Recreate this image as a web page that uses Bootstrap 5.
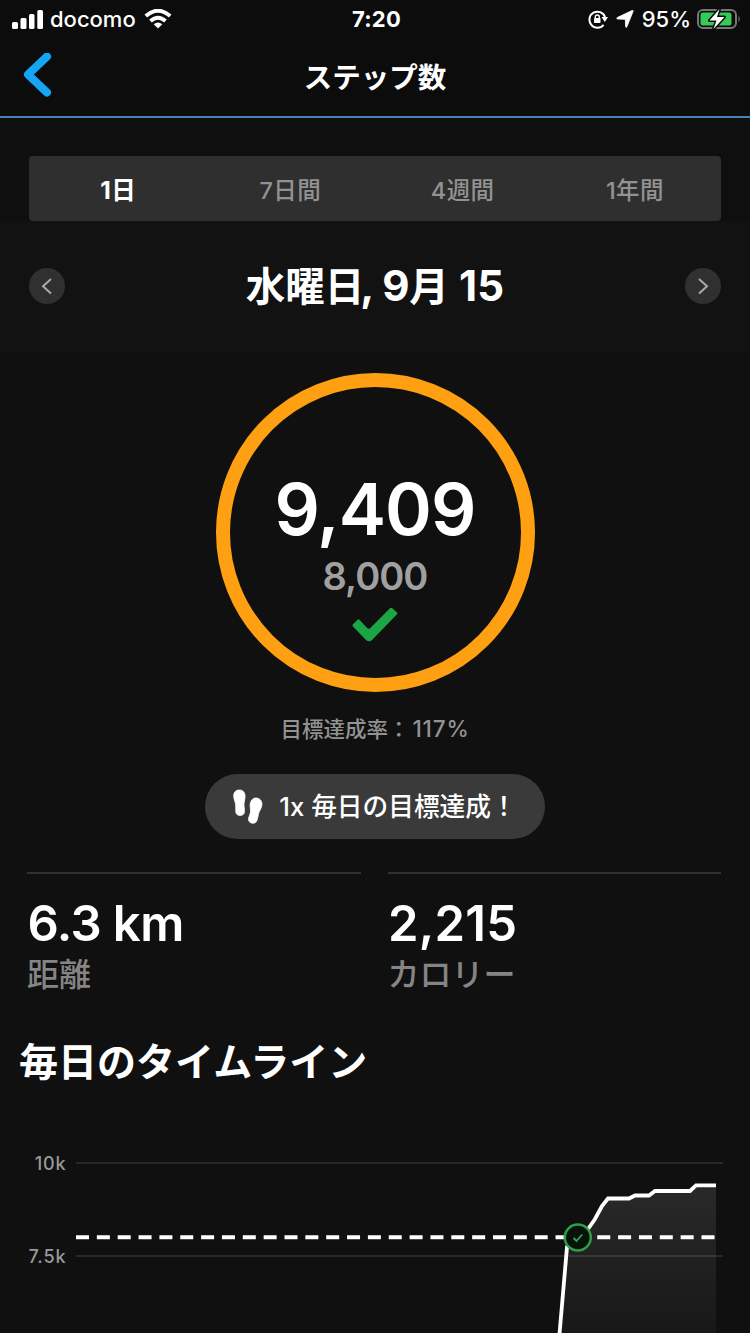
<!DOCTYPE html>
<html lang="ja">
<head>
<meta charset="utf-8">
<meta name="viewport" content="width=device-width, initial-scale=1">
<title>ステップ数</title>
<link href="https://cdn.jsdelivr.net/npm/bootstrap@5.3.0/dist/css/bootstrap.min.css" rel="stylesheet">
<style>
  body { background: #101010; color: #fff; font-family: Inter, "Noto Sans CJK JP", sans-serif; overflow: hidden; }
  .screen { width: 750px; height: 1333px; }
  .top-area { background: #0c0c0c; border-bottom: 2px solid #4583b9; height: 118px; }
  .status { height: 38px; font-size: 22px; line-height: 38px; padding: 0 9px 0 12px; }
  .status > div { flex: 1 1 0; }
  .carrier { margin-left: 7px; margin-right: 8px; font-weight: 500; }
  .pct { font-weight: 500; }
  .clock { font-weight: 700; letter-spacing: .2px; }
  .titlebar { height: 78px; padding: 0 20px; }
  .titlebar h1 { font-size: 28.5px; line-height: 40px; font-weight: 700; padding-top: 1px; }
  .side { width: 36px; }
  .tab-zone { background: #0f0f0f; height: 103px; padding: 37.5px 29px 0; }
  .periods { background: #2f2f2f; border-radius: 4px; height: 65.5px; font-size: 23.5px; }
  .periods .nav-link { color: #929292; padding: 0; line-height: 69px; height: 65.5px; font-weight: 500; letter-spacing: .4px; }
  .periods .nav-link.active { color: #fff; font-weight: 700; letter-spacing: .4px; font-size: 24.5px; padding-left: 3px; }
  .date-zone { background: #121212; height: 130px; padding: 0 29px; }
  .date-zone h2 { font-size: 39.5px; line-height: 60px; font-weight: 700; padding-top: 1px; }
  .date-zone h2 span { font-size: 42px; letter-spacing: .2px; }
  .date-zone h2 .sep { margin-left: -4px; letter-spacing: -.3px; }
  .step-btn { width: 36px; height: 36px; background: #303030; border-radius: 50%; padding: 0; }
  .ring-box { height: 342px; padding-top: 22px; }
  .dial { width: 319px; height: 319px; border: 14.5px solid #ff9f12; border-radius: 50%; padding-top: 82px; }
  .steps { font-size: 71px; line-height: 80px; font-weight: 600; letter-spacing: -.9px; }
  .target { font-size: 38px; line-height: 54px; font-weight: 600; color: #a0a0a0; letter-spacing: -1px; }
  .rate { font-size: 21.5px; line-height: 30px; margin-top: 21px; color: #929292; font-weight: 500; }
  .rate span { font-size: 22.5px; letter-spacing: .8px; margin-left: 3px; }
  .award { width: 340px; height: 65px; margin-top: 30px; background: #3a3a3a; font-size: 25.7px; font-weight: 500; }
  .award-text { padding-top: 2px; }
  .metrics { padding: 33px 29px 0 27px; gap: 27px; }
  .metric { border-top: 2px solid #303030; height: 128px; padding-top: 23px; }
  .metric b { font-size: 49px; line-height: 54px; font-weight: 600; letter-spacing: .2px; padding-left: .5px; }
  .metric b.dist { letter-spacing: -.6px; }
  .metric span { font-size: 32px; line-height: 48px; color: #858585; font-weight: 500; }
  .section-title { font-size: 39px; line-height: 60px; font-weight: 700; margin: 32px 0 0 19px; }
  .chart text { font-size: 18px; fill: #999; font-weight: 500; letter-spacing: .9px; }
</style>
</head>
<body>
<main class="screen d-flex flex-column overflow-hidden">
  <header class="top-area flex-shrink-0">
    <div class="status d-flex align-items-center">
      <div class="d-flex align-items-center">
        <svg width="31" height="19" fill="#fff"><rect y="12" width="6" height="7" rx="1.5"/><rect x="8.5" y="8" width="6" height="11" rx="1.5"/><rect x="17" y="4" width="5.5" height="15" rx="1.5"/><rect x="25.3" y="0" width="5.7" height="19" rx="1.5"/></svg>
        <span class="carrier">docomo</span>
        <svg width="28" height="20" viewBox="0 0 28 20" fill="none" stroke="#fff" stroke-width="4"><path d="M1.8 7Q14-3.5 26.2 7"/><path d="M6.5 12Q14 5.5 21.500 12"/><path d="M9.700 15.300Q14 11.500 18.300 15.300L14 19.500Z" fill="#fff" stroke="none"/></svg>
      </div>
      <div class="clock text-center">7:20</div>
      <div class="d-flex align-items-center justify-content-end">
        <svg width="20" height="20" viewBox="0 0 20 20" fill="none" stroke="#fff" stroke-width="2"><path d="M15.600 15.800A8 8 0 1 1 17 8"/><path d="M13.500 8h6.500l-3.200 5z" fill="#fff" stroke="none"/><rect x="6" y="9" width="6.500" height="5" rx=".8" fill="#fff" stroke="none"/><path d="M7.300 9.500V8a2 2 0 0 1 4 0v1.500" stroke-width="1.400"/></svg>
        <svg class="ms-2 me-2" width="18" height="18" viewBox="0 0 18 18"><path d="M17.300.8 10.800 17q-.8 1-1.200-.3L9.300 9.300 1.500 9Q0 8.500 1.200 7.600L16 .6q1-.4 1.300.2z" fill="#fff" stroke="#fff" stroke-width=".8"/></svg>
        <span class="pct">95%</span>
        <svg style="margin-left:6px" width="44" height="24" viewBox="0 0 44 24"><rect x="1" y="3" width="38" height="18" rx="5" fill="none" stroke="#777" stroke-width="2"/><rect x="3.500" y="5.500" width="31" height="13" rx="2.500" fill="#35cb58"/><path d="M41.500 8.500q2.500 3.500 0 7z" fill="#777"/><path d="M22.500 2 12.500 13.500h7l-3 8.500 11-12h-7.500z" fill="#fff" stroke="#0c0c0c" stroke-width="3" stroke-linejoin="round" paint-order="stroke"/></svg>
      </div>
    </div>
    <div class="titlebar d-flex align-items-center justify-content-between">
      <svg class="side" width="36" height="48" viewBox="0 0 36 48"><path d="M27 3.500 8 21.500 27 39.500" fill="none" stroke="#14a5f4" stroke-width="8" stroke-linecap="round" stroke-linejoin="round"/></svg>
      <h1 class="m-0">ステップ数</h1>
      <div class="side"></div>
    </div>
  </header>

  <div class="tab-zone flex-shrink-0">
    <nav class="periods nav nav-justified">
      <a class="nav-item nav-link active" href="#">1日</a>
      <a class="nav-item nav-link" href="#">7日間</a>
      <a class="nav-item nav-link" href="#">4週間</a>
      <a class="nav-item nav-link" href="#">1年間</a>
    </nav>
  </div>

  <section class="date-zone d-flex align-items-center justify-content-between flex-shrink-0">
    <button class="step-btn btn d-flex align-items-center justify-content-center border-0" aria-label="前の日"><svg width="36" height="36" fill="none" stroke="#aaa" stroke-width="2"><path d="m22 11-8 7.300 8 7.200"/></svg></button>
    <h2 class="m-0">水曜日<span class="sep">, 9</span>月<span> 15</span></h2>
    <button class="step-btn btn d-flex align-items-center justify-content-center border-0" aria-label="次の日"><svg width="36" height="36" fill="none" stroke="#aaa" stroke-width="2"><path d="m14 11 8 7.300-8 7.200"/></svg></button>
  </section>

  <section class="d-flex flex-column align-items-center text-center flex-shrink-0">
    <div class="ring-box">
      <div class="dial d-flex flex-column align-items-center">
        <div class="steps">9,409</div>
        <div class="target">8,000</div>
        <svg class="mt-1" width="46" height="36" viewBox="0 0 46 36"><path d="M.8 19.200q-.8-.8 0-1.600l4.800-4.900q.9-.8 1.800 0l7.800 8.200q1.600 1.500 3.200 0L38.200 1.100q.9-.8 1.800 0l5 4.500q.9.800 0 1.700L20.300 32.700q-3.300 3.200-6.600 0z" fill="#1ba544"/></svg>
      </div>
    </div>
    <div class="rate">目標達成率：<span>117%</span></div>
    <div class="award rounded-pill d-flex align-items-center justify-content-center">
      <svg class="me-3" width="30" height="36" viewBox="0 0 30 36" fill="#fff" stroke="#fff" stroke-width=".8"><path d="M6.500 1C10 1 12.500 3.800 12 8.500c-.2 3-1.200 5-1 8 .2 2.500.8 4 .3 7-.5 4-7.700 4-8.400 0-.5-3 .2-5-.3-8C2.100 12 .7 10 .7 6.500.8 3 3 1 6.500 1z"/><path d="M23.500 9c4 .5 6 3.700 5.300 7.500-.6 3.500-2.300 5-3.200 8-.7 2.500-.8 5-1.800 7.300-1.800 4.300-8.800 2.500-8.300-1.800.4-3 1.700-4.500 2-7 .3-3-.8-5-.3-8.100.7-3.900 3-6.200 6.300-5.900z"/></svg>
      <span class="award-text">1x 毎日の目標達成！</span>
    </div>
  </section>

  <section class="metrics d-flex flex-shrink-0">
    <div class="metric flex-fill w-50 d-flex flex-column"><b class="dist">6.3 km</b><span>距離</span></div>
    <div class="metric flex-fill w-50 d-flex flex-column"><b>2,215</b><span>カロリー</span></div>
  </section>

  <h2 class="section-title flex-shrink-0">毎日のタイムライン</h2>

  <svg class="chart flex-shrink-0" width="750" height="241" viewBox="0 1092 750 241">
    <defs><linearGradient id="area" x1="0" y1="0" x2="0" y2="1"><stop offset="0" stop-color="#292929"/><stop offset="1" stop-color="#181818"/></linearGradient></defs>
    <path d="M559.500 1333 567 1247 577 1238 588 1229 595 1219 602 1206 608 1198.500H629L635 1195.500H649L655 1191H690L696 1185.300H716V1333Z" fill="url(#area)"/>
    <path d="M76 1163H723M76 1256H723" stroke="#fff" stroke-opacity=".1" stroke-width="2"/>
    <text x="66.500" y="1169.500" text-anchor="end">10k</text>
    <text x="66.500" y="1262.500" text-anchor="end">7.5k</text>
    <path d="M76 1237.300H716" stroke="#fff" stroke-width="4" stroke-dasharray="13 7.850"/>
    <path d="M559.500 1334 567 1247 577 1238 588 1229 595 1219 602 1206 608 1198.500H629L635 1195.500H649L655 1191H690L696 1185.300H716" fill="none" stroke="#fff" stroke-width="3.800"/>
    <circle cx="577.800" cy="1237.500" r="13" fill="#07120a" stroke="#2d9f4b" stroke-width="2.500"/>
    <path d="m573.500 1238 3 3 5.700-6.500" fill="none" stroke="#36a553" stroke-width="1.800"/>
  </svg>
</main>
<script src="https://cdn.jsdelivr.net/npm/bootstrap@5.3.0/dist/js/bootstrap.bundle.min.js"></script>
</body>
</html>
